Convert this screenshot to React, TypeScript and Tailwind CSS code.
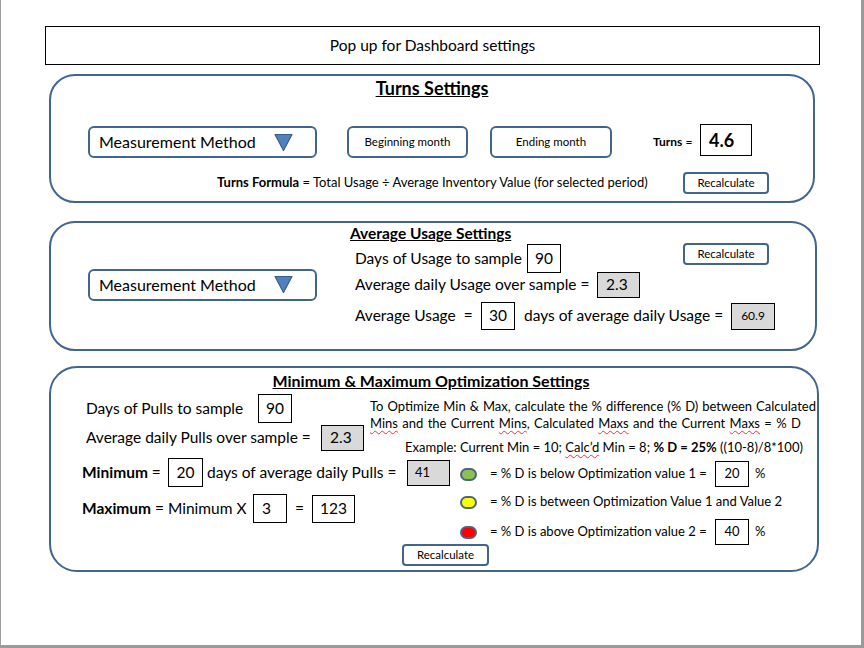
import React from "react";

const BLUE = "border-[#41658f]";

function Triangle() {
  return (
    <svg width="19" height="19" viewBox="0 0 19 19" className="shrink-0">
      <polygon points="1,1.5 18,1.5 9.5,17.5" fill="#4f81bd" stroke="#385d8a" strokeWidth="1.2" strokeLinejoin="round" />
    </svg>
  );
}

function MethodBox() {
  return (
    <div className={`w-[229px] h-[32px] rounded-[6px] border-2 ${BLUE} flex items-center pl-[9px] pr-[22px] text-[16px]`}>
      <span className="whitespace-nowrap">Measurement Method</span>
      <span className="ml-auto"><Triangle /></span>
    </div>
  );
}

function Recalc({ className = "" }: { className?: string }) {
  return (
    <div className={`h-[22px] w-[86px] rounded-[4px] border-2 ${BLUE} flex items-center justify-center text-[11.5px] ${className}`}>
      Recalculate
    </div>
  );
}

function Val({ v, gray, className = "" }: { v: string; gray?: boolean; className?: string }) {
  return (
    <div className={`flex items-center border border-black shrink-0 ${gray ? "bg-[#d9d9d9]" : "bg-white"} ${className}`}>
      {v}
    </div>
  );
}

const wavy = "underline decoration-wavy decoration-red-500 decoration-1 underline-offset-[2px]";

function Dot({ color }: { color: string }) {
  return <div className={`w-[17px] h-[13px] rounded-full border-2 border-[#4a6488] shrink-0 ${color}`} />;
}

export default function App() {
  return (
    <div className="w-[864px] h-[648px] bg-white border-l border-l-[#a0a0a0] border-r-[3px] border-b-[3px] border-r-[#9a9a9a] border-b-[#9a9a9a] font-[Lato,sans-serif] text-black overflow-hidden">
      <div className="pt-[26px] pl-[44px]">
        {/* header */}
        <div className="w-[775px] h-[39px] border border-black flex items-center justify-center text-[15.5px]">
          Pop up for Dashboard settings
        </div>

        {/* Turns */}
        <div className={`ml-[4px] mt-[9px] w-[766px] h-[129px] border-2 ${BLUE} rounded-[26px]`}>
          <div className="h-[24px] flex items-center justify-center text-[18px] font-bold underline">Turns Settings</div>
          <div className="mt-[26px] h-[32px] flex items-center pl-[37px]">
            <MethodBox />
            <div className={`ml-[30px] w-[121px] h-[32px] rounded-[6px] border-2 ${BLUE} flex items-center justify-center text-[11.5px]`}>
              Beginning month
            </div>
            <div className={`ml-[22px] w-[122px] h-[32px] rounded-[6px] border-2 ${BLUE} flex items-center justify-center text-[11.5px]`}>
              Ending month
            </div>
            <div className="ml-[41px] w-[47px] text-[12px] whitespace-nowrap">
              <span className="font-bold">Turns</span> =
            </div>
            <Val v="4.6" className="mb-[4px] w-[52px] h-[32px] pl-[8px] text-[18px] font-bold" />
          </div>
          <div className="mt-[14px] h-[22px] flex items-center">
            <div className="ml-[166px] w-[466px] text-[13px] whitespace-nowrap">
              <span className="font-bold">Turns Formula</span> = Total Usage ÷ Average Inventory Value (for selected period)
            </div>
            <Recalc />
          </div>
        </div>

        {/* Average usage */}
        <div className={`ml-[4px] mt-[18px] w-[768px] h-[130px] border-2 ${BLUE} rounded-[26px] flex`}>
          <div className="ml-[37px] self-center mb-[3px]">
            <MethodBox />
          </div>
          <div className="ml-[33px] pt-[1px] flex flex-col text-[15.5px]">
            <div className="h-[20px] flex items-center text-[15.5px] font-bold underline">Average Usage Settings</div>
            <div className="h-[29px] flex items-center">
              <span className="pl-[5px] w-[177px] whitespace-nowrap">Days of Usage to sample</span>
              <Val v="90" className="w-[34px] h-[29px] justify-center" />
              <Recalc className="ml-[122px] self-start -mt-[1px]" />
            </div>
            <div className="-mt-[1px] h-[26px] flex items-center">
              <span className="pl-[5px] w-[247px] whitespace-nowrap">Average daily Usage over sample =</span>
              <Val v="2.3" gray className="w-[43px] h-[26px] pl-[8px]" />
            </div>
            <div className="mt-[4px] h-[28px] flex items-center">
              <span className="pl-[5px] w-[131px] whitespace-pre">Average Usage  =</span>
              <Val v="30" className="w-[34px] h-[28px] justify-center" />
              <span className="ml-[9px] w-[207px] whitespace-nowrap">days of average daily Usage =</span>
              <Val v="60.9" gray className="w-[44px] h-[27px] justify-center text-[12px]" />
            </div>
          </div>
        </div>

        {/* Min & Max */}
        <div className={`ml-[4px] mt-[15px] w-[770px] h-[206px] border-2 ${BLUE} rounded-[28px]`}>
          <div className="mt-[1px] h-[24px] flex items-center justify-center pr-[6px] text-[16px] font-bold underline">
            Minimum &amp; Maximum Optimization Settings
          </div>
          <div className="flex">
            <div className="w-[319px] pl-[35px] text-[15.5px]">
              <div className="mt-[1px] h-[29px] flex items-center">
                <span className="w-[172px] whitespace-nowrap">Days of Pulls to sample</span>
                <Val v="90" className="w-[34px] h-[29px] justify-center" />
              </div>
              <div className="mt-[2px] h-[26px] flex items-center">
                <span className="w-[235px] whitespace-nowrap">Average daily Pulls over sample =</span>
                <Val v="2.3" gray className="w-[43px] h-[26px] pl-[8px]" />
              </div>
            </div>
            <div className="w-[446px] pt-[5px] text-[13px] leading-[17px]">
              <div className="text-justify [text-align-last:justify] whitespace-nowrap">
                To Optimize Min &amp; Max, calculate the % difference (% D) between Calculated
              </div>
              <div className="whitespace-nowrap [word-spacing:1px]">
                <span className={wavy}>Mins</span> and the Current <span className={wavy}>Mins</span>, Calculated{" "}
                <span className={wavy}>Maxs</span> and the Current <span className={wavy}>Maxs</span> = % D
              </div>
              <div className="mt-[7px] ml-[35px] whitespace-nowrap">
                Example: Current Min = 10; <span className={wavy}>Calc’d</span> Min = 8;{" "}
                <span className="font-bold">% D = 25%</span> ((10-8)/8*100)
              </div>
            </div>
          </div>
          <div className="mt-[2px] flex">
            <div className="w-[409px] pl-[31px] text-[15.5px]">
              <div className="h-[29px] flex items-center">
                <span className="w-[86px] whitespace-nowrap"><span className="font-bold">Minimum</span> =</span>
                <Val v="20" className="w-[35px] h-[29px] justify-center" />
                <span className="pl-[4px] w-[204px] whitespace-nowrap">days of average daily Pulls =</span>
                <Val v="41" gray className="w-[43px] h-[26px] pl-[7px] text-[13px]" />
              </div>
              <div className="mt-[7px] h-[29px] flex items-center">
                <span className="w-[171px] whitespace-nowrap"><span className="font-bold">Maximum</span> = Minimum X</span>
                <Val v="3" className="w-[34px] h-[29px] pl-[8px]" />
                <span className="w-[25px] text-center">=</span>
                <Val v="123" className="w-[43px] h-[28px] justify-center" />
              </div>
            </div>
            <div className="text-[13px]">
              <div className="mt-[3px] h-[26px] flex items-center">
                <Dot color="bg-[#8cc152]" />
                <span className="ml-[13px] w-[225px] whitespace-nowrap">= % D is below Optimization value 1 =</span>
                <Val v="20" className="w-[34px] h-[26px] justify-center text-[13px]" />
                <span className="ml-[6px]">%</span>
              </div>
              <div className="mt-[2px] h-[26px] flex items-center">
                <Dot color="bg-[#ffff00]" />
                <span className="ml-[13px] whitespace-nowrap">= % D is between Optimization Value 1 and Value 2</span>
              </div>
              <div className="mt-[4px] h-[26px] flex items-center">
                <Dot color="bg-[#ff0000]" />
                <span className="ml-[13px] w-[225px] whitespace-nowrap">= % D is above Optimization value 2 =</span>
                <Val v="40" className="w-[34px] h-[26px] justify-center text-[13px]" />
                <span className="ml-[6px]">%</span>
              </div>
            </div>
          </div>
          <div className="-mt-[1px] pl-[351px]">
            <Recalc className="w-[87px]" />
          </div>
        </div>
      </div>
    </div>
  );
}
